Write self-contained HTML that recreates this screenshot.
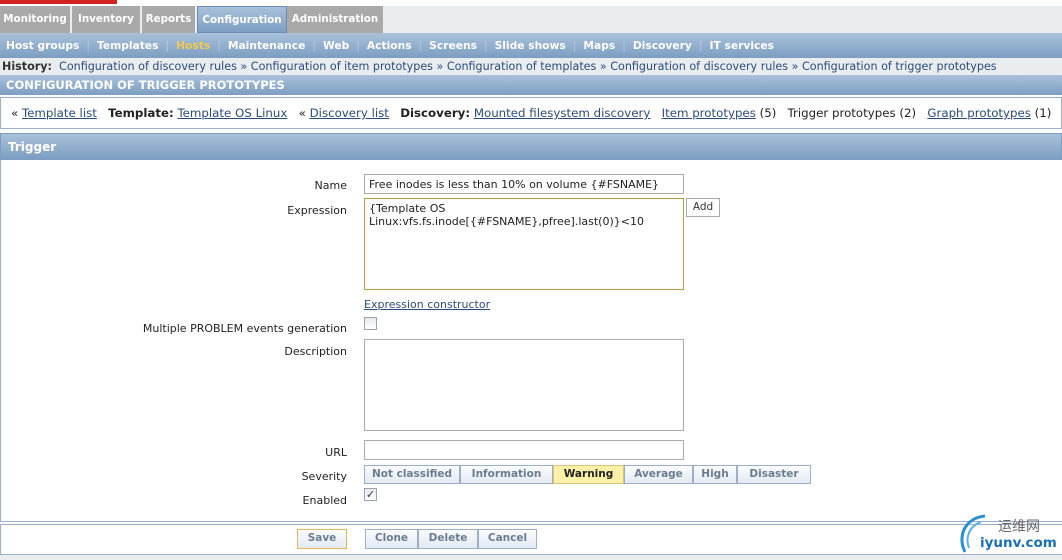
<!DOCTYPE html>
<html><head><meta charset="utf-8"><style>
*{margin:0;padding:0;box-sizing:border-box}
body{width:1062px;height:560px;overflow:hidden;background:#fff;font-family:"DejaVu Sans","Liberation Sans",sans-serif;font-size:11px;color:#222;position:relative}
.a{position:absolute;white-space:nowrap}
a,.u{color:#2b4c7a;text-decoration:underline}
.tab{position:absolute;top:6px;height:27px;background:#a9a9a9;color:#fff;font-weight:bold;font-size:10.3px;line-height:27px;text-align:center;border-right:2px solid #eaedf0}
.blue{background:linear-gradient(#a9c1da,#7d9ec2)}
.sub{top:33px;height:25px;left:0;width:1062px;color:#fff;font-weight:bold;line-height:25px;padding-left:6px;font-size:10.7px}
.sub span.s{color:#b5c8dc;margin:0 7px;font-weight:normal}
.lbl{position:absolute;text-align:right;width:300px;left:47px;white-space:nowrap}
.inp{position:absolute;border:1px solid #aaa;background:#fff}
.btn{position:absolute;border:1px solid #9bb0c8;background:linear-gradient(#fafcfe,#e3eaf2);color:#6b7d91;font-weight:bold;text-align:center;line-height:17px;height:19px;font-size:10.5px}
.cb{position:absolute;width:13px;height:13px;border:1px solid #9aa5b3;background:linear-gradient(#e6e9ee,#fff)}
</style></head><body>
<div class="a" style="left:0;top:0;width:117px;height:4px;background:#d32121"></div>
<div class="a" style="left:0;top:6px;width:1062px;height:27px;background:#eaedf0"></div>
<div class="tab" style="left:0;width:72px">Monitoring</div>
<div class="tab" style="left:72px;width:70px">Inventory</div>
<div class="tab" style="left:142px;width:55px">Reports</div>
<div class="tab blue" style="left:197px;width:90px;border:1px solid #6b8db5">Configuration</div>
<div class="tab" style="left:287px;width:98px">Administration</div>
<div class="a blue sub">Host groups<span class="s">|</span>Templates<span class="s">|</span><span style="color:#f2c94c">Hosts</span><span class="s">|</span>Maintenance<span class="s">|</span>Web<span class="s">|</span>Actions<span class="s">|</span>Screens<span class="s">|</span>Slide shows<span class="s">|</span>Maps<span class="s">|</span>Discovery<span class="s">|</span>IT services</div>
<div class="a" style="left:0;top:58px;width:1062px;height:17px;background:#eaedf0;line-height:17px;padding-left:2px;color:#2b4c7a;font-size:11.15px"><b style="color:#333">History:</b>&nbsp; Configuration of discovery rules » Configuration of item prototypes » Configuration of templates » Configuration of discovery rules » Configuration of trigger prototypes</div>
<div class="a blue" style="left:0;top:75px;width:1062px;height:20px;color:#fff;font-weight:bold;line-height:20px;padding-left:6px;font-size:11.5px">CONFIGURATION OF TRIGGER PROTOTYPES</div>
<div class="a" style="left:0;top:97px;width:1062px;height:32px;border:1px solid #9bb0c8;line-height:30px;padding-left:10px;font-size:11.8px">« <span class="u">Template list</span> &nbsp;&nbsp;<b>Template:</b> <span class="u">Template OS Linux</span> &nbsp;&nbsp;« <span class="u">Discovery list</span> &nbsp;&nbsp;<b>Discovery:</b> <span class="u">Mounted filesystem discovery</span> &nbsp;&nbsp;<span class="u">Item prototypes</span> (5) &nbsp;&nbsp;Trigger prototypes (2) &nbsp;&nbsp;<span class="u">Graph prototypes</span> (1)</div>
<div class="a blue" style="left:0;top:133px;width:1062px;height:27px;border:1px solid #7d9ec2;color:#fff;font-weight:bold;line-height:26px;padding-left:7px;font-size:12px">Trigger</div>
<div class="a" style="left:0;top:160px;width:1px;height:362px;background:#9bb0c8"></div>
<div class="lbl" style="top:179px">Name</div>
<div class="inp" style="left:364px;top:174px;width:320px;height:20px;padding:3px 4px">Free inodes is less than 10% on volume {#FSNAME}</div>
<div class="lbl" style="top:204px">Expression</div>
<div class="inp" style="left:364px;top:198px;width:320px;height:92px;border:1px solid #b59a4a;padding:3px 4px;line-height:13px;white-space:normal">{Template OS<br>Linux:vfs.fs.inode[{#FSNAME},pfree].last(0)}&lt;10</div>
<div class="btn" style="left:686px;top:198px;width:34px;color:#333;font-weight:normal;background:#fff;border-color:#aaa">Add</div>
<div class="a u" style="left:364px;top:298px;font-size:11px">Expression constructor</div>
<div class="lbl" style="top:322px">Multiple PROBLEM events generation</div>
<div class="cb" style="left:364px;top:317px"></div>
<div class="lbl" style="top:345px">Description</div>
<div class="inp" style="left:364px;top:339px;width:320px;height:92px"></div>
<div class="lbl" style="top:446px">URL</div>
<div class="inp" style="left:364px;top:440px;width:320px;height:20px"></div>
<div class="lbl" style="top:470px">Severity</div>
<div class="btn" style="left:364px;top:465px;width:96px">Not classified</div>
<div class="btn" style="left:460px;top:465px;width:93px">Information</div>
<div class="btn" style="left:553px;top:465px;width:71px;background:#fdf0a8;color:#222;border-color:#d9c47a">Warning</div>
<div class="btn" style="left:624px;top:465px;width:69px">Average</div>
<div class="btn" style="left:693px;top:465px;width:44px">High</div>
<div class="btn" style="left:737px;top:465px;width:74px">Disaster</div>
<div class="lbl" style="top:494px">Enabled</div>
<div class="cb" style="left:364px;top:488px;color:#334;font-size:11px;line-height:11px;text-align:center">✓</div>
<div class="a" style="left:0;top:521px;width:1062px;height:4px;border-top:1px solid #9bb0c8;border-bottom:1px solid #9bb0c8"></div>
<div class="a" style="left:0;top:525px;width:1062px;height:35px;border-left:1px solid #9bb0c8"></div>
<div class="a" style="left:0;top:554px;width:1062px;height:6px;background:#eaedf0;border-top:1px solid #9bb0c8"></div>
<div class="btn" style="left:297px;top:529px;width:50px;height:20px;border-color:#e8b858">Save</div>
<div class="btn" style="left:365px;top:529px;width:53px;height:20px">Clone</div>
<div class="btn" style="left:418px;top:529px;width:60px;height:20px">Delete</div>
<div class="btn" style="left:478px;top:529px;width:59px;height:20px">Cancel</div>
<svg class="a" style="left:955px;top:512px" width="40" height="44"><path d="M30 4 C10 6 2 24 10 40" stroke="#2a8fd0" stroke-width="3" fill="none"/><path d="M26 10 C14 14 10 26 14 36" stroke="#5bb3e6" stroke-width="2" fill="none"/></svg>
<div class="a" style="left:998px;top:516px;font-family:'Noto Sans CJK SC',sans-serif;font-size:14px;color:#666">运维网</div>
<div class="a" style="left:980px;top:535px;font-size:13.5px;font-weight:bold;color:#1b6fb5">iyunv.com</div>
</body></html>
